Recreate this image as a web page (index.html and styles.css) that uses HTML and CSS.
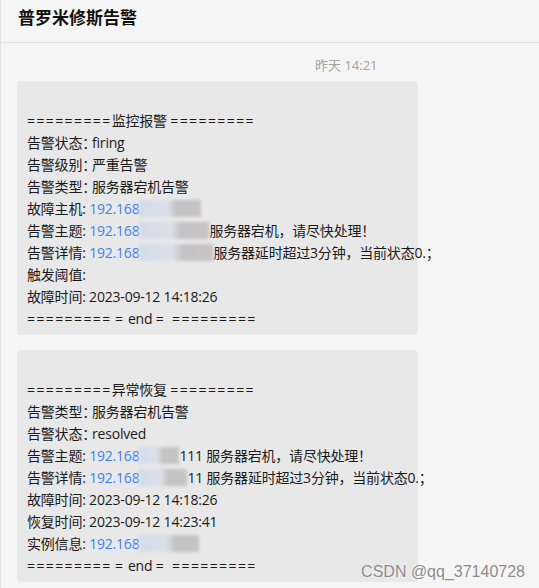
FILE: index.html
```html
<!DOCTYPE html>
<html lang="zh-CN">
<head>
    <meta charset="UTF-8">
    <meta name="viewport" content="width=device-width, initial-scale=1.0">
    <title>普罗米修斯告警</title>
    <link rel="stylesheet" href="styles.css">
</head>
<body>
    <div class="chat">
        <div class="header">
            <h1>普罗米修斯告警</h1>
        </div>

        <div class="messages">
            <div class="time">昨天 14:21</div>

            <div class="bubble">
                <div class="line">&nbsp;</div>
                <div class="line"><span class="eq">=========</span>监控报警 <span class="eq">=========</span></div>
                <div class="line">告警状态<span class="colon">：</span>firing</div>
                <div class="line">告警级别<span class="colon">：</span>严重告警</div>
                <div class="line">告警类型<span class="colon">：</span>服务器宕机告警</div>
                <div class="line">故障主机: <span class="ip">192.168</span><span class="mask w62"></span></div>
                <div class="line">告警主题: <span class="ip">192.168</span><span class="mask w70"></span>服务器宕机，请尽快处理！</div>
                <div class="line">告警详情: <span class="ip">192.168</span><span class="mask w74"></span>服务器延时超过3分钟，当前状态0.；</div>
                <div class="line">触发阈值:</div>
                <div class="line">故障时间: 2023-09-12 14:18:26</div>
                <div class="line"><span class="eq">=========</span> <span class="eq">=</span> end <span class="eq">=</span>&nbsp; <span class="eq">=========</span></div>
            </div>

            <div class="bubble">
                <div class="line">&nbsp;</div>
                <div class="line"><span class="eq">=========</span>异常恢复 <span class="eq">=========</span></div>
                <div class="line">告警类型<span class="colon">：</span>服务器宕机告警</div>
                <div class="line">告警状态<span class="colon">：</span>resolved</div>
                <div class="line">告警主题: <span class="ip">192.168</span><span class="mask w40"></span>111 服务器宕机，请尽快处理！</div>
                <div class="line">告警详情: <span class="ip">192.168</span><span class="mask w50"></span>11 服务器延时超过3分钟，当前状态0.；</div>
                <div class="line">故障时间: 2023-09-12 14:18:26</div>
                <div class="line">恢复时间: 2023-09-12 14:23:41</div>
                <div class="line">实例信息: <span class="ip">192.168</span><span class="mask w60"></span></div>
                <div class="line"><span class="eq">=========</span> <span class="eq">=</span> end <span class="eq">=</span>&nbsp; <span class="eq">=========</span></div>
            </div>
        </div>

        <div class="credit">CSDN @qq_37140728</div>
    </div>
</body>
</html>
```

FILE: styles.css
```css
* {
    margin: 0;
    padding: 0;
    box-sizing: border-box;
}

body {
    background-color: #f5f5f5;
    font-family: "Open Sans", "Noto Sans CJK SC", sans-serif;
    color: #1a1a1a;
    overflow: hidden;
}

.chat {
    position: relative;
    height: 100vh;
    border-left: 1px solid #e3e3e3;
}

.header {
    height: 43px;
    padding: 6px 0 0 17px;
    border-bottom: 1px solid #e2e2e2;
}

.header h1 {
    font-family: "Noto Sans CJK SC", sans-serif;
    font-size: 17px;
    font-weight: bold;
    line-height: 22px;
    color: #111;
}

.messages {
    padding: 12px 0 0 16px;
}

.time {
    padding-left: 298px;
    font-size: 13px;
    line-height: 20px;
    color: #a3a3a3;
}

.bubble {
    width: 401px;
    margin-top: 6px;
    margin-bottom: 15px;
    padding: 7px 6px 5px 10px;
    background-color: #e8e8e8;
    border-radius: 4px;
    font-size: 14px;
    letter-spacing: -0.2px;
}

.line {
    line-height: 22px;
    height: 22px;
    white-space: nowrap;
}

.eq {
    letter-spacing: 1.4px;
}

.colon {
    font-feature-settings: "halt";
    padding-right: 3px;
}

.ip {
    color: #3c82f0;
}

.mask {
    display: inline-block;
    height: 17px;
    vertical-align: -3px;
    background: linear-gradient(to right, #d4dbea 0%, #dbe0e9 45%, #c3c3c5 60%, #c6c3c3 100%);
    filter: blur(1.5px);
}

.w40 { width: 40px; }
.w50 { width: 48px; }
.w60 { width: 60px; }
.w62 { width: 62px; }
.w70 { width: 70px; }
.w74 { width: 74px; }

.credit {
    position: absolute;
    right: 14px;
    bottom: 7px;
    font-family: "Liberation Sans", Arial, sans-serif;
    font-size: 16px;
    color: #8c8c8c;
    text-shadow: 0 0 2px #fff;
}
```
